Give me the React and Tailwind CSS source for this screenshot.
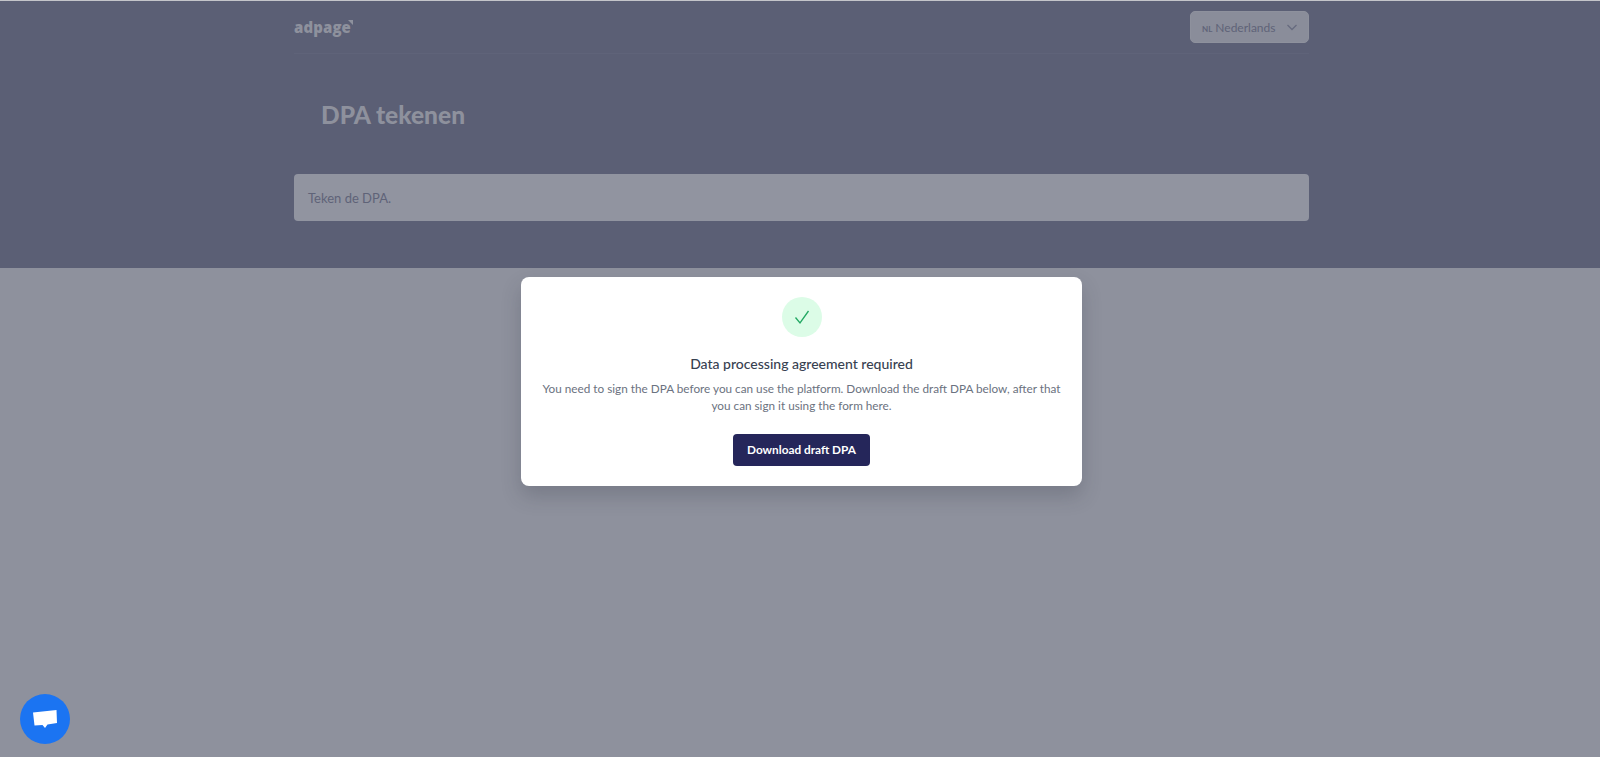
import React from "react";

export default function App() {
  return (
    <div className="relative h-[757px] overflow-hidden bg-[#8e919d] font-['Lato','Liberation_Sans',sans-serif]">
      <header className="h-[268px] border-t border-[#c4c5ca] bg-[#5b5f75]">
        <div className="ml-[294px] w-[1015px]">
          <div className="flex h-[53px] items-center justify-between border-b border-[#5f6379]">
            <div className="relative flex items-center font-['Open_Sans',sans-serif] text-[15px] font-extrabold tracking-[0.1px] text-[#8e919d]">
              adpage
              <svg className="absolute -right-[2px] top-[4px]" width="5" height="5" viewBox="0 0 5 5"><path d="M0 0h5v5z" fill="#8e919d" /></svg>
            </div>
            <div className="flex h-[32px] w-[119px] items-center justify-between rounded-[5px] border border-[#8e919d] bg-[#8a8d9a] pl-[11px] pr-[10px] text-[#5f6378]">
              <span className="mt-[1px] flex items-baseline gap-[3px] text-[12px]">
                <span className="text-[8px] font-bold">NL</span>
                <span>Nederlands</span>
              </span>
              <svg width="12" height="12" viewBox="0 0 12 12" fill="none" stroke="#676b7f" strokeWidth="1.3"><path d="M1.500 4l4.500 4.500L10.500 4" /></svg>
            </div>
          </div>
          <h1 className="mt-[43px] pl-[27px] text-[24.500px] leading-[36px] font-black text-[#8e919d]">DPA tekenen</h1>
          <div className="mt-[41px] flex h-[47px] items-center rounded-[4px] bg-[#9194a0] px-[14px] pt-[2px] text-[13px] text-[#5f6378]">Teken de DPA.</div>
        </div>
      </header>
      <div className="absolute left-[521px] top-[277px] flex h-[209px] w-[561px] flex-col items-center rounded-[8px] bg-white px-[16px] pt-[20px] shadow-[0_10px_20px_rgba(40,44,60,0.22)]">
        <div className="flex h-[40px] w-[40px] items-center justify-center rounded-full bg-[#dcfce7]">
          <svg width="24" height="24" viewBox="0 0 24 24" fill="none" stroke="#22a862" strokeWidth="1.3"><path d="M5.500 12.500L10 18l8.500-12" /></svg>
        </div>
        <h3 className="mt-[15px] text-[14px] leading-[24px] font-medium text-[#374151]">Data processing agreement required</h3>
        <p className="mt-[4px] w-[525px] text-center text-[11.750px] leading-[17px] text-[#6b7280]">You need to sign the DPA before you can use the platform. Download the draft DPA below, after that you can sign it using the form here.</p>
        <button className="mt-[20px] h-[32px] w-[137px] rounded-[4px] bg-[#25265a] text-[11.800px] font-bold text-white">Download draft DPA</button>
      </div>
      <div className="absolute bottom-[13px] left-[20px] flex h-[50px] w-[50px] items-center justify-center rounded-full bg-[#1b74f2]">
        <svg width="26" height="22" viewBox="0 0 26 22"><path d="M1 4.500L24.500 2 25 15 15.500 16.500 13 20 10.500 17 2.500 17.500z" fill="#fff" /></svg>
      </div>
    </div>
  );
}
